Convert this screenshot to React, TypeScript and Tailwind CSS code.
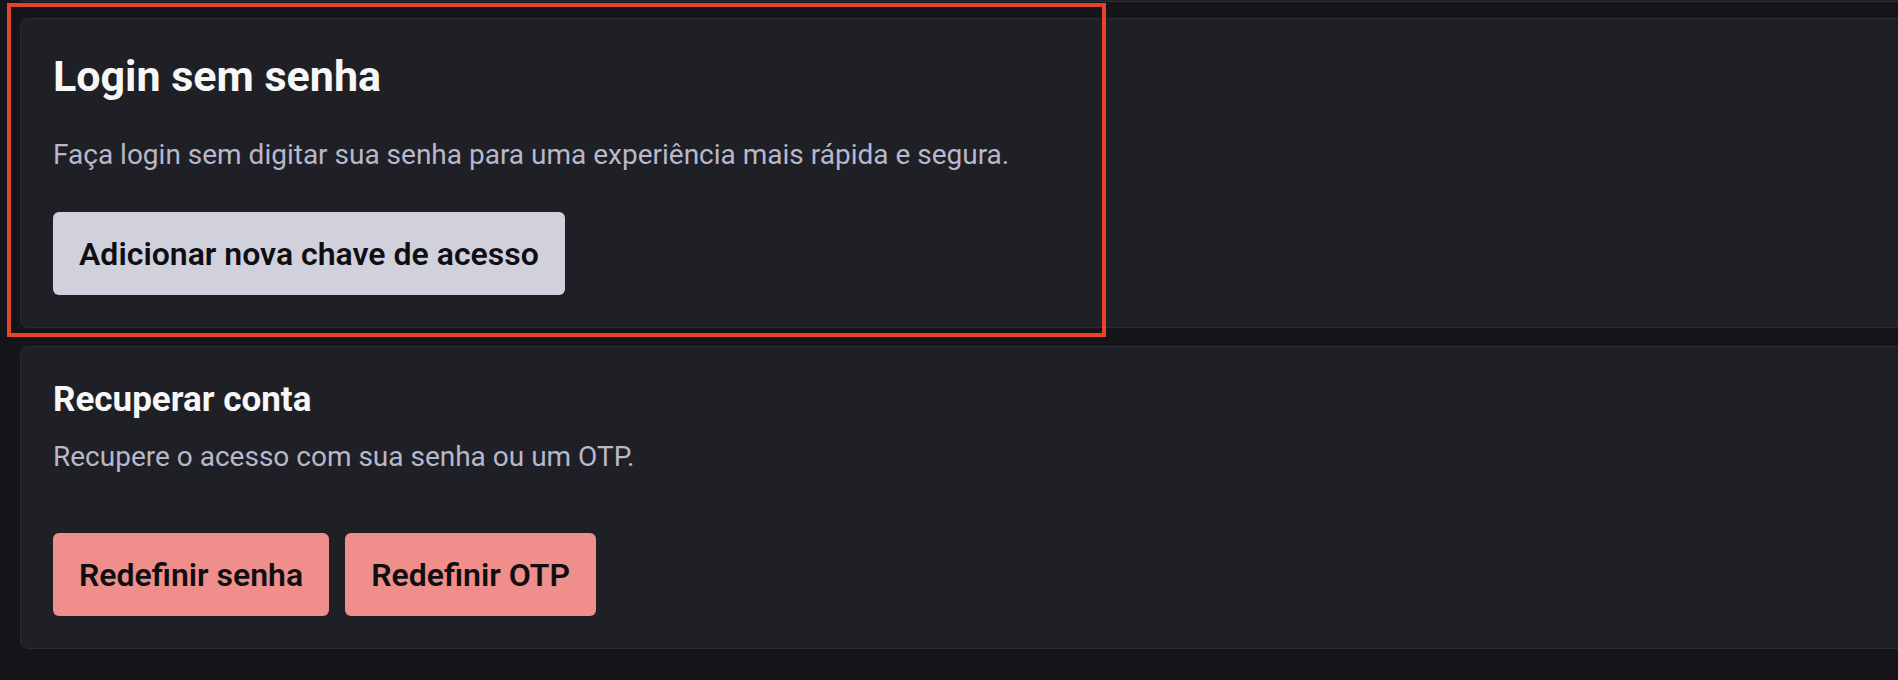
import React from 'react';

const font = { fontFamily: 'Roboto, "Noto Sans", sans-serif' };

function Card({ children }: { children: React.ReactNode }) {
  return (
    <div className="mr-[-40px] rounded-lg border border-[#2a2b33] bg-[#1f2025] p-8">
      {children}
    </div>
  );
}

function App() {
  return (
    <div className="relative h-[680px] w-full overflow-hidden bg-[#151519] pl-5" style={font}>
      {/* bottom edge of the card above, cut off by the viewport */}
      <div className="mr-[-40px] h-[2px] rounded-b-lg border-b border-[#2a2b33] bg-[#1f2025]" />

      <div className="mt-4">
        <Card>
          <h2 className="text-[43px] font-bold leading-[50px] text-[#f7f7f8]">Login sem senha</h2>
          <p className="mt-[33px] text-[28px] leading-[42px] text-[#b8b7cb]">
            Faça login sem digitar sua senha para uma experiência mais rápida e segura.
          </p>
          <button className="mt-9 h-[83px] rounded-md bg-[#d1d1dd] px-[26px] text-[32px] font-semibold text-[#0f0f12]">
            Adicionar nova chave de acesso
          </button>
        </Card>
      </div>

      <div className="mt-[18px]">
        <Card>
          <h3 className="text-[35px] font-bold leading-[41px] text-[#f7f7f8]">Recuperar conta</h3>
          <p className="mt-4 text-[28px] leading-[42px] text-[#b8b7cb]">
            Recupere o acesso com sua senha ou um OTP.
          </p>
          <div className="mt-[55px] flex gap-4">
            <button className="h-[83px] rounded-md bg-[#ef8e8a] px-[26px] text-[32px] font-semibold text-[#0f0f12]">
              Redefinir senha
            </button>
            <button className="h-[83px] rounded-md bg-[#ef8e8a] px-[26px] text-[32px] font-semibold text-[#0f0f12]">
              Redefinir OTP
            </button>
          </div>
        </Card>
      </div>

      {/* highlight frame drawn over the first card */}
      <div className="pointer-events-none absolute left-[7px] top-[3px] h-[334px] w-[1099px] border-[4px] border-[#e5432b]" />
    </div>
  );
}

export default App;
